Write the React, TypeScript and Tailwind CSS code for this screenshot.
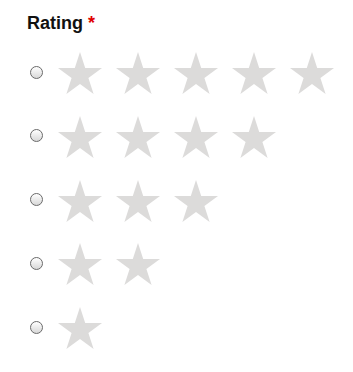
const STAR_POINTS =
  "0,-1 0.2245,-0.309 0.951,-0.309 0.363,0.118 0.588,0.809 0,0.382 -0.588,0.809 -0.363,0.118 -0.951,-0.309 -0.2245,-0.309";

function Star() {
  return (
    <svg width="44" height="42" viewBox="-0.951 -1 1.902 1.809" className="shrink-0">
      <polygon points={STAR_POINTS} fill="#dcdbda" />
    </svg>
  );
}

function Radio() {
  return (
    <div className="w-[13px] h-[13px] rounded-full border border-[#6a6a6a] bg-gradient-to-b from-white to-[#d8d8d8] shrink-0 ml-[3px] -mt-[2px]" />
  );
}

export default function App() {
  const rows = [5, 4, 3, 2, 1];
  return (
    <div className="w-[353px] h-[372px] bg-white pl-[27px] pt-[13px]" style={{ fontFamily: '"Liberation Sans", Arial, sans-serif' }}>
      <div className="text-[18px] leading-[21px] font-bold text-[#111]">
        Rating <span className="text-[#e00000]">*</span>
      </div>
      <div className="flex flex-col gap-[21.75px] mt-[18px]">
        {rows.map((n) => (
          <label key={n} className="flex items-center h-[42px]">
            <Radio />
            <div className="flex gap-[14px] ml-[15px]">
              {Array.from({ length: n }).map((_, i) => (
                <Star key={i} />
              ))}
            </div>
          </label>
        ))}
      </div>
    </div>
  );
}
